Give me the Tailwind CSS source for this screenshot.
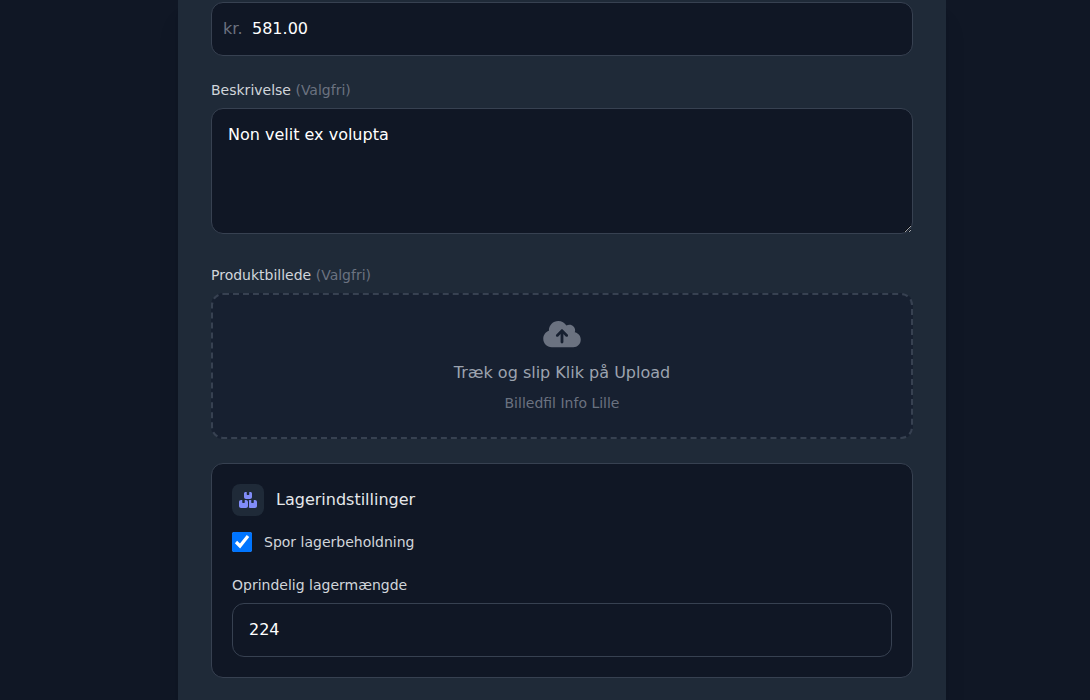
<!DOCTYPE html>
<html lang="da">
  <head>
    <meta charset="UTF-8" />
    <meta name="viewport" content="width=device-width, initial-scale=1.0" />
    <title>Produkt</title>
    <script src="https://cdn.jsdelivr.net/npm/@tailwindcss/browser@4"></script>
  </head>

  <body
    class="min-h-screen bg-[#101725] pl-[34px] font-['DejaVu_Sans',sans-serif] text-base text-white"
  >
    <main
      class="max-w-3xl min-h-screen mx-auto px-8 pt-0.5 pb-[22px] bg-[#1f2a38] border-x border-[#1f2a38] shadow-xl"
    >
      <form class="space-y-6">
        <!-- Price -->
        <div class="relative">
          <span
            class="absolute inset-y-0 left-0 pl-3 flex items-center text-[#6b7280] pointer-events-none"
            >kr.</span
          >
          <input
            type="text"
            inputmode="decimal"
            id="price"
            aria-label="Pris"
            value="581.00"
            class="block w-full pl-10 pr-4 py-3.5 bg-[#101725] border border-[#374151] rounded-xl focus:outline-none focus:ring-2 focus:ring-indigo-500"
          />
        </div>

        <!-- Description -->
        <div>
          <label for="description" class="block mb-2 text-sm text-[#d1d5db]"
            >Beskrivelse <span class="text-[#6b7280]">(Valgfri)</span></label
          >
          <textarea
            id="description"
            rows="4"
            class="w-full px-4 py-3.5 align-baseline bg-[#101725] border border-[#374151] rounded-xl focus:outline-none focus:ring-2 focus:ring-indigo-500"
          >
Non velit ex volupta</textarea
          >
        </div>

        <!-- Image upload -->
        <div>
          <label for="image" class="block mb-2 text-sm text-[#d1d5db]"
            >Produktbillede <span class="text-[#6b7280]">(Valgfri)</span></label
          >
          <label
            for="image"
            class="flex flex-col items-center p-6 bg-[#172030] border-2 border-dashed border-[#374151] rounded-xl text-center cursor-pointer"
          >
            <svg
              class="h-[30px] w-[38px] mb-3 text-[#6b7280]"
              viewBox="0 0 640 512"
              fill="currentColor"
              aria-hidden="true"
            >
              <path
                d="M144 480C64.5 480 0 415.5 0 336c0-62.8 40.2-116.2 96.2-135.9c-.1-2.7-.2-5.4-.2-8.1c0-88.4 71.6-160 160-160c59.3 0 111 32.2 138.7 80.2C409.9 102 428.3 96 448 96c53 0 96 43 96 96c0 12.2-2.3 23.8-6.4 34.6C596 238.4 640 290.1 640 352c0 70.7-57.3 128-128 128H144zm79-217c-9.4 9.4-9.4 24.6 0 33.9s24.6 9.4 33.9 0l39-39V392c0 13.3 10.7 24 24 24s24-10.7 24-24V257.9l39 39c9.4 9.4 24.6 9.4 33.9 0s9.4-24.6 0-33.9l-80-80c-9.4-9.4-24.6-9.4-33.9 0l-80 80z"
              />
            </svg>
            <span class="text-[#9ca3af]">Træk og slip Klik på Upload</span>
            <span class="mt-2 text-sm text-[#6b7280]">Billedfil Info Lille</span>
            <input type="file" id="image" accept="image/*" class="hidden" />
          </label>
        </div>

        <!-- Stock settings -->
        <section class="p-5 bg-[#101725] border border-[#374151] rounded-xl">
          <div class="flex items-center gap-3 mb-4">
            <div
              class="flex items-center justify-center w-8 h-8 bg-[#1f2a38] rounded-lg"
            >
              <svg
                class="h-4 w-[18px] text-[#818cf8]"
                viewBox="0 0 576 512"
                fill="currentColor"
                aria-hidden="true"
              >
                <path
                  d="M248 0H208c-26.5 0-48 21.5-48 48V160c0 35.3 28.7 64 64 64H352c35.3 0 64-28.7 64-64V48c0-26.5-21.5-48-48-48H328V80c0 8.8-7.2 16-16 16H264c-8.8 0-16-7.2-16-16V0zM64 256c-35.3 0-64 28.7-64 64V448c0 35.3 28.7 64 64 64H224c35.3 0 64-28.7 64-64V320c0-35.3-28.7-64-64-64H184v80c0 8.8-7.2 16-16 16H120c-8.8 0-16-7.2-16-16V256H64zM352 512H512c35.3 0 64-28.7 64-64V320c0-35.3-28.7-64-64-64H472v80c0 8.8-7.2 16-16 16H408c-8.8 0-16-7.2-16-16V256H352c-15 0-28.8 5.1-39.7 13.8c4.9 10.4 7.7 22 7.7 34.2V464c0 12.2-2.8 23.8-7.7 34.2C323.2 506.9 337 512 352 512z"
                />
              </svg>
            </div>
            <h2 class="text-[#e5e7eb]">Lagerindstillinger</h2>
          </div>

          <div class="flex items-center gap-3 mb-[23px]">
            <input type="checkbox" id="trackStock" checked class="w-5 h-5" />
            <label for="trackStock" class="text-sm text-[#d1d5db]"
              >Spor lagerbeholdning</label
            >
          </div>

          <label for="stock" class="block mb-2 text-sm text-[#d1d5db]"
            >Oprindelig lagermængde</label
          >
          <input
            type="text"
            inputmode="numeric"
            id="stock"
            value="224"
            class="block w-full px-4 py-3.5 bg-[#101725] border border-[#374151] rounded-xl focus:outline-none focus:ring-2 focus:ring-indigo-500"
          />
        </section>
      </form>
    </main>
  </body>
</html>
